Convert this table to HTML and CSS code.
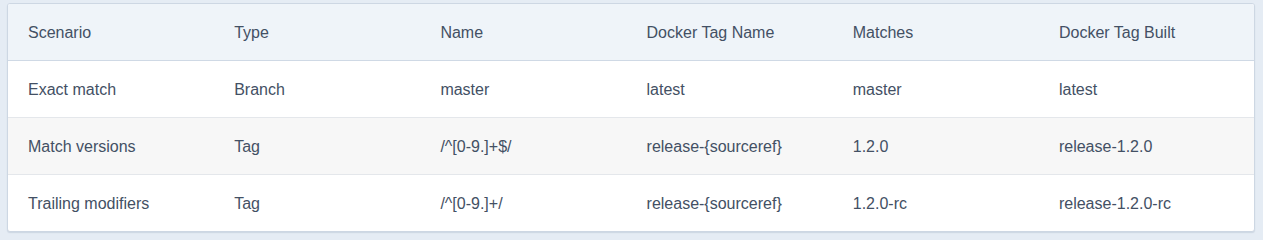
FILE: index.html
```html
<!DOCTYPE html>
<html lang="en">
<head>
<meta charset="utf-8">
<title>Docker tag scenarios</title>
<link rel="stylesheet" href="styles.css">
</head>
<body>
<div class="card">
  <table class="tags">
    <colgroup>
      <col class="c"><col class="c"><col class="c"><col class="c"><col class="c"><col class="c-last">
    </colgroup>
    <thead>
      <tr>
        <th>Scenario</th>
        <th>Type</th>
        <th>Name</th>
        <th>Docker Tag Name</th>
        <th>Matches</th>
        <th>Docker Tag Built</th>
      </tr>
    </thead>
    <tbody>
      <tr>
        <td>Exact match</td>
        <td>Branch</td>
        <td>master</td>
        <td>latest</td>
        <td>master</td>
        <td>latest</td>
      </tr>
      <tr class="alt">
        <td>Match versions</td>
        <td>Tag</td>
        <td>/^[0-9.]+$/</td>
        <td>release-{sourceref}</td>
        <td>1.2.0</td>
        <td>release-1.2.0</td>
      </tr>
      <tr>
        <td>Trailing modifiers</td>
        <td>Tag</td>
        <td>/^[0-9.]+/</td>
        <td>release-{sourceref}</td>
        <td>1.2.0-rc</td>
        <td>release-1.2.0-rc</td>
      </tr>
    </tbody>
  </table>
</div>
</body>
</html>
```
FILE: styles.css
```css
html, body {
  margin: 0;
  padding: 0;
  background: #e5ecf4;
}
body {
  padding: 3px 8px 9px 7px;
  font-family: "Liberation Sans", Arial, Helvetica, sans-serif;
  font-size: 16px;
  color: #435064;
}
.card {
  background: #ffffff;
  border: 1px solid #cdd7e3;
  border-radius: 3px;
  overflow: hidden;
  box-shadow: 0 1px 1px rgba(160, 175, 195, 0.35);
}
.tags {
  width: 100%;
  border-collapse: collapse;
  table-layout: fixed;
}
.tags col.c {
  width: 206.2px;
}
.tags th,
.tags td {
  text-align: left;
  font-weight: normal;
  padding: 18px 20px 16px;
  line-height: 22px;
  height: 22px;
  white-space: nowrap;
}
.tags thead th {
  background: #eff4f9;
  border-bottom: 1px solid #cfd9e5;
}
.tags tbody tr + tr td {
  border-top: 1px solid #e4e7eb;
}
.tags tbody tr.alt td {
  background: #f7f7f7;
}
```
